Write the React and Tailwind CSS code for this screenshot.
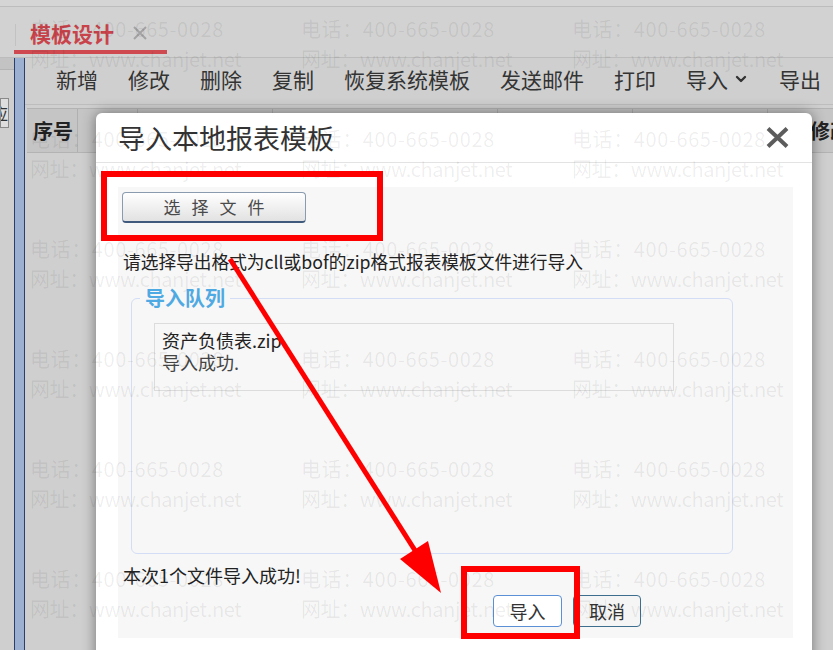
import { ChevronDown } from 'lucide-react';

const TOOLBAR = ['新增', '修改', '删除', '复制', '恢复系统模板', '发送邮件', '打印'];

const COLUMNS = [
  { w: 'w-[51px]', label: '序号' },
  { w: 'w-[60px]', label: '' },
  { w: 'w-[135px]', label: '' },
  { w: 'w-[225px]', label: '' },
  { w: 'w-[135px]', label: '' },
  { w: 'w-[135px]', label: '' },
];

// watermark grid: 3 columns x 6 rows
const MARKS = Array.from({ length: 18 });

function Watermark() {
  return (
    <div className="absolute inset-0 pointer-events-none overflow-hidden pl-[30px] pt-[14px]">
      <div className="grid grid-cols-[repeat(3,271px)] auto-rows-[110px]">
        {MARKS.map((_, i) => (
          <div key={i} className="text-[20px] leading-[30px] text-[rgba(0,0,0,0.07)] whitespace-nowrap">
            <div className="tracking-[0.6px]">电话：400-665-0028</div>
            <div className="tracking-[-0.4px]">网址：www.chanjet.net</div>
          </div>
        ))}
      </div>
    </div>
  );
}

function Annotations() {
  return (
    <>
      {/* red boxes */}
      <div className="absolute left-[101px] top-[171px] w-[282px] h-[70px] border-[6px] border-[#ff0000] pointer-events-none" />
      <div className="absolute left-[461px] top-[566px] w-[119px] h-[73px] border-[6px] border-[#ff0000] pointer-events-none" />
      {/* red arrow */}
      <svg className="absolute inset-0 pointer-events-none" width="833" height="650" viewBox="0 0 833 650">
        <line x1="230" y1="259" x2="416" y2="552" stroke="#ff0000" strokeWidth="5" />
        <polygon points="441,593 400,559 428,541" fill="#ff0000" />
      </svg>
    </>
  );
}

function ImportDialog() {
  return (
    <div className="absolute left-[96px] top-[113px] w-[716px] h-[560px] bg-white rounded-t-[6px] shadow-[0_0_14px_rgba(0,0,0,0.45)]">
      {/* header */}
      <div className="h-[50px] flex items-center justify-between pl-[22px] pr-[23px] border-b border-[#e3e3e3]">
        <span className="text-[27px] leading-[34px] text-[#333]">导入本地报表模板</span>
        <svg width="23" height="21" viewBox="0 0 23 21">
          <path d="M2 1.5 L21 19.5 M21 1.5 L2 19.5" stroke="#5c5c5c" strokeWidth="4" />
        </svg>
      </div>

      {/* body */}
      <div className="pt-[24px] pl-[22px] pr-[19px]">
        <div className="bg-[#f7f7f7] h-[451px] flex flex-col items-start">
          <button className="mt-[5px] ml-[4px] w-[184px] h-[31px] rounded-[4px] border border-[#8a9bb0] border-b-2 border-b-[#3f5a7d] bg-gradient-to-b from-[#ffffff] to-[#e2e2e2] text-[17px] leading-[20px] text-[#4a4a4a] tracking-[11px] pl-[11px]">
            选择文件
          </button>

          <p className="mt-[26px] ml-[5px] text-[17.7px] leading-[24px] text-[#222]">
            请选择导出格式为cll或bof的zip格式报表模板文件进行导入
          </p>

          <fieldset className="mt-[13px] ml-[13px] w-[602px] h-[268px] border border-[#d3ddf5] rounded-[6px]">
            <legend className="ml-[8px] px-[5px] text-[20px] leading-[24px] font-bold text-[#4fa9e2]">导入队列</legend>
            <div className="mt-[13px] ml-[22px] w-[520px] h-[68px] border border-[#dcdcdc] pl-[7px] pt-[5px]">
              <div className="text-[18px] leading-[22px] text-[#222]">资产负债表.zip</div>
              <div className="text-[18px] leading-[23px] text-[#444]">导入成功.</div>
            </div>
          </fieldset>

          <p className="mt-[9px] ml-[5px] text-[18px] leading-[24px] text-[#222]">本次1个文件导入成功!</p>

          <div className="mt-[8px] ml-[375px] flex gap-[11px]">
            <button className="w-[69px] h-[32px] rounded-[4px] border border-[#5b8fd6] bg-white text-[18px] leading-[22px] text-[#333]">
              导入
            </button>
            <button className="w-[68px] h-[32px] rounded-[4px] border border-[#3d6e8e] bg-[#f5f5f5] text-[18px] leading-[22px] text-[#333]">
              取消
            </button>
          </div>
        </div>
      </div>
    </div>
  );
}

export default function App() {
  return (
    <div className="relative w-[833px] h-[650px] overflow-hidden bg-[#cfcfcf] font-['Noto_Sans_CJK_SC',sans-serif]">
      {/* top strip */}
      <div className="h-[7px] bg-[#d5d5d5] border-b border-[#bdbdbd]" />

      {/* tab row */}
      <div className="h-[51px] border-b border-[#bcbcbc] flex items-start pl-[14px] bg-[#d2d2d2]">
        <div className="relative flex items-center pl-[16px] pr-[20px] pt-[14px] pb-[5px] border-b-4 border-[#cf4950]">
          <span className="absolute left-[1px] top-[17px] h-[22px] border-l border-[#c2c2c2]" />
          <span className="text-[21px] leading-[24px] font-bold text-[#c9434b]">模板设计</span>
          <svg className="ml-[19px]" width="14" height="14" viewBox="0 0 14 14">
            <path d="M1 1 L13 13 M13 1 L1 13" stroke="#a3a3a3" strokeWidth="2" />
          </svg>
        </div>
      </div>

      {/* body row */}
      <div className="flex h-[592px]">
        {/* left strip */}
        <div className="w-[14px] flex flex-col">
          <div className="h-[12px] bg-[#c3c3c3] border-b border-[#b4b4b4]" />
          <div className="mt-[28px] w-[9px] h-[30px] border border-[#8a8a8a] bg-[#dedede] overflow-hidden flex justify-end items-center">
            <span className="text-[16px] leading-[20px] text-[#333] shrink-0">应</span>
          </div>
        </div>

        {/* blue splitter */}
        <div className="w-[11px] border-x border-[#2c3f6b] bg-[#9cb1d1]" />

        {/* main */}
        <div className="flex-1 flex flex-col min-w-0">
          <div className="h-[46px] flex items-center pl-[31px] pb-[4px] gap-[30px] text-[21px] leading-[26px] text-[#333] whitespace-nowrap">
            {TOOLBAR.map(t => <span key={t}>{t}</span>)}
            <span className="flex items-center">
              导入
              <span className="ml-[5px] w-[16px] flex justify-center">
                <ChevronDown size={16} strokeWidth={3.5} />
              </span>
            </span>
            <span>导出</span>
          </div>
          <div className="h-px bg-[#bdbdbd]" />
          <div className="mt-[3px] ml-[2px] h-[45px] flex border-y border-[#b3b3b3] bg-[#c5c5c5] overflow-hidden">
            {COLUMNS.map((c, i) => (
              <div key={i} className={`${c.w} shrink-0 border-r border-[#b0b0b0] flex items-center pl-[6px] text-[20px] font-bold text-[#222]`}>
                {c.label}
              </div>
            ))}
            <div className="flex-1 flex items-center pl-[42px] text-[20px] font-bold text-[#222] whitespace-nowrap">修改人</div>
          </div>
        </div>
      </div>

      <ImportDialog />
      <Watermark />
      <Annotations />
    </div>
  );
}
